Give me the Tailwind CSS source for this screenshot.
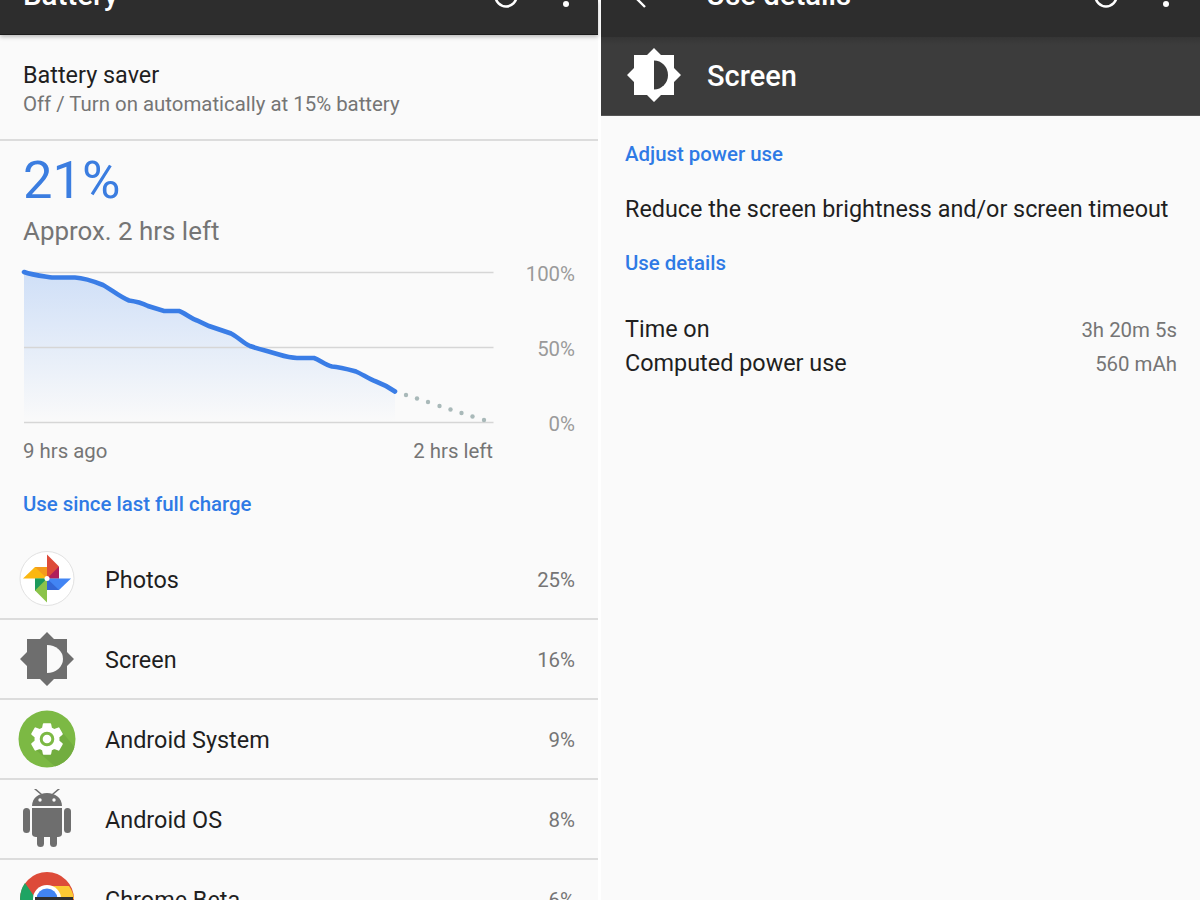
<!DOCTYPE html>
<html>
<head>
<meta charset="utf-8">
<script src="https://cdn.jsdelivr.net/npm/@tailwindcss/browser@4"></script>
</head>
<body class="m-0 bg-white">
<div class="w-[1200px] h-[900px] overflow-hidden flex font-['Roboto',sans-serif] bg-white">
  <!-- Left -->
  <div class="w-[598px] h-[900px] bg-[#fafafa] flex flex-col shrink-0">
    <div class="h-[35px] bg-[#2d2d2d] shrink-0 relative overflow-hidden shadow-[0_2px_4px_rgba(0,0,0,0.25)] z-10 border-b border-[#1c1c1c]">
      <span class="absolute left-[23px] top-[-21px] text-[29.5px] leading-[32px] font-medium text-white">Battery</span>
      <svg class="absolute left-[493px] top-[-17px]" width="26" height="26" viewBox="0 0 26 26" fill="none" stroke="#fff" stroke-width="2.6"><circle cx="13" cy="13" r="10.5"/></svg>
      <div class="absolute left-[563px] top-[1px] w-[6px] h-[6px] rounded-full bg-white"></div>
    </div>
    <div class="h-[106px] shrink-0 border-b-2 border-[#dcdcdc] px-[23px] pt-[25px]">
      <div class="text-[23.4px] leading-[30px] text-[#1f1f1f]">Battery saver</div>
      <div class="text-[20.4px] leading-[28px] text-[#757575]">Off / Turn on automatically at 15% battery</div>
    </div>
    <div class="px-[23px] h-[126px] shrink-0">
      <div class="text-[52.5px] leading-[60px] text-[#3b7de0] mt-[9px]">21%</div>
      <div class="text-[25.9px] leading-[30px] text-[#757575] mt-[6px]">Approx. 2 hrs left</div>
    </div>
    <div class="relative h-[162px] shrink-0">
      <svg class="absolute left-0 top-0" width="598" height="162" viewBox="0 267 598 162">
        <defs>
          <linearGradient id="fillg" x1="0" y1="0" x2="0" y2="1">
            <stop offset="0" stop-color="#cfdff7"/>
            <stop offset="1" stop-color="#fafafa"/>
          </linearGradient>
        </defs>
        <path d="M24 272 C32 275 42 276 52 277.500 L75 277.500 C85 278 93 281 103 285 C112 290 120 297 129 300.500 C137 301.500 142 303 148 306 L164 311 L179 311 C185 313 190 318 197 320.500 L209 326 L231 333.500 C238 337 243 343 250 346 C258 349 265 350.500 272 352.500 C281 355 288 358 297 358 L314 358 C320 360 325 365 332 366.500 C340 367 347 369 356 371.500 C362 374 369 379 376 381.500 C384 384.500 390 388 395 391.500 L395 422 L24 422 Z" fill="url(#fillg)"/>
        <g stroke="#d6d6d6" stroke-width="1.500">
          <path d="M24 272.500H493.500M24 347.500H493.500M24 422.500H493.500"/>
        </g>
        <path d="M24 272 C32 275 42 276 52 277.500 L75 277.500 C85 278 93 281 103 285 C112 290 120 297 129 300.500 C137 301.500 142 303 148 306 L164 311 L179 311 C185 313 190 318 197 320.500 L209 326 L231 333.500 C238 337 243 343 250 346 C258 349 265 350.500 272 352.500 C281 355 288 358 297 358 L314 358 C320 360 325 365 332 366.500 C340 367 347 369 356 371.500 C362 374 369 379 376 381.500 C384 384.500 390 388 395 391.500" fill="none" stroke="#3a7de6" stroke-width="4.600" stroke-linecap="round"/>
        <g fill="#a9b9b9">
          <circle cx="406" cy="395" r="2.200"/><circle cx="417" cy="398.500" r="2.200"/><circle cx="428" cy="402" r="2.200"/><circle cx="439.500" cy="406" r="2.200"/><circle cx="450.500" cy="409.500" r="2.200"/><circle cx="461.500" cy="413" r="2.200"/><circle cx="472.500" cy="416.500" r="2.200"/><circle cx="484" cy="420" r="2.200"/>
        </g>
      </svg>
      <span class="absolute right-[23px] top-[-5px] text-[20.4px] leading-[24px] text-[#9a9a9a]">100%</span>
      <span class="absolute right-[23px] top-[70px] text-[20.4px] leading-[24px] text-[#9a9a9a]">50%</span>
      <span class="absolute right-[23px] top-[145px] text-[20.4px] leading-[24px] text-[#9a9a9a]">0%</span>
    </div>
    <div class="h-[44px] shrink-0 px-[23px] pr-[105px] flex justify-between items-start pt-[10px] text-[20.4px] leading-[24px] text-[#757575]">
      <span>9 hrs ago</span><span>2 hrs left</span>
    </div>
    <div class="h-[67px] shrink-0 px-[23px] pt-[17px] text-[20.4px] leading-[28px] font-medium text-[#2f7ae5]">Use since last full charge</div>

    <div class="h-[80px] shrink-0 flex items-center border-b-2 border-[#dcdcdc] relative">
      <div class="w-[105px] pl-[19px] shrink-0">
        <svg class="block" width="56" height="56" viewBox="0 0 56 56">
          <circle cx="28" cy="27.500" r="27" fill="#fff" stroke="#e2e2e2" stroke-width="1"/>
          <path d="M28 27.500V3.500L40 15.500V27.500Z" fill="#dd4b39"/>
          <path d="M40 15.500V27.500H28Z" fill="#b01e5b"/>
          <path d="M28 27.500H4L16 16H28Z" fill="#fbb710"/>
          <path d="M16 16H28V27.500Z" fill="#f49b1d"/>
          <path d="M28 27.500V51.500L16 39.500V27.500Z" fill="#8bc34a"/>
          <path d="M16 27.500V39.500L28 27.500Z" fill="#1c9a5c"/>
          <path d="M28 27.500H52L40 39H28Z" fill="#4285f4"/>
          <path d="M40 39H28V27.500Z" fill="#3367d6"/>
          <circle cx="28" cy="27.500" r="2.500" fill="#fff"/>
        </svg>
      </div>
      <span class="text-[23.4px] text-[#1f1f1f] translate-y-[2px]">Photos</span>
      <span class="absolute right-[23px] text-[20.4px] text-[#757575] translate-y-[1px]">25%</span>
    </div>
    <div class="h-[80px] shrink-0 flex items-center border-b-2 border-[#dcdcdc] relative">
      <div class="w-[105px] pl-[19px] shrink-0">
        <svg class="block" width="56" height="56" viewBox="0 0 56 56">
          <path d="M28 1L35 8H48V21L55 28L48 35V48H35L28 55L21 48H8V35L1 28L8 21V8H21Z" fill="#6e6e6e"/>
          <path d="M28 14A16 14 0 0 1 28 42Z" fill="#fafafa"/>
        </svg>
      </div>
      <span class="text-[23.4px] text-[#1f1f1f] translate-y-[2px]">Screen</span>
      <span class="absolute right-[23px] text-[20.4px] text-[#757575] translate-y-[1px]">16%</span>
    </div>
    <div class="h-[80px] shrink-0 flex items-center border-b-2 border-[#dcdcdc] relative">
      <div class="w-[105px] pl-[18px] shrink-0">
        <svg class="block" width="58" height="58" viewBox="0 0 58 58">
          <circle cx="29" cy="29" r="28.500" fill="#7cb944"/>
          <path d="M40 17L56.500 37A28.500 28.500 0 0 1 37 56.500L18 40Z" fill="#72ad3f"/>
          <g transform="translate(29 29) scale(0.83) translate(-29 -29)">
            <path d="M25 11H33L34 16L38 18L43 16L47 23L43 26.500V31.500L47 35L43 42L38 40L34 42L33 47H25L24 42L20 40L15 42L11 35L15 31.500V26.500L11 23L15 16L20 18L24 16Z" fill="#fff" stroke="#fff" stroke-width="2" stroke-linejoin="round"/>
            <circle cx="29" cy="29" r="7" fill="#fff" stroke="#7cb944" stroke-width="3.600"/>
          </g>
        </svg>
      </div>
      <span class="text-[23.4px] text-[#1f1f1f] translate-y-[2px]">Android System</span>
      <span class="absolute right-[23px] text-[20.4px] text-[#757575] translate-y-[1px]">9%</span>
    </div>
    <div class="h-[80px] shrink-0 flex items-center border-b-2 border-[#dcdcdc] relative">
      <div class="w-[105px] pl-[22px] shrink-0">
        <svg class="block" width="50" height="60" viewBox="0 0 50 60" fill="#6e6e6e">
          <path d="M13 0L19 5M37 0L31 5" stroke="#6e6e6e" stroke-width="1.600" stroke-linecap="round"/>
          <path d="M10 17C10 9 17 4 25 4C33 4 40 9 40 17Z"/>
          <circle cx="18" cy="11" r="1.700" fill="#fafafa"/><circle cx="32" cy="11" r="1.700" fill="#fafafa"/>
          <path d="M10 19H40V45C40 47 38 48 36 48H14C12 48 10 47 10 45Z"/>
          <rect x="1" y="19" width="7" height="25" rx="3.500"/>
          <rect x="42" y="19" width="7" height="25" rx="3.500"/>
          <rect x="15" y="44" width="7" height="14" rx="3.500"/>
          <rect x="28" y="44" width="7" height="14" rx="3.500"/>
        </svg>
      </div>
      <span class="text-[23.4px] text-[#1f1f1f] translate-y-[2px]">Android OS</span>
      <span class="absolute right-[23px] text-[20.4px] text-[#757575] translate-y-[1px]">8%</span>
    </div>
    <div class="h-[80px] shrink-0 flex items-center relative">
      <div class="w-[105px] pl-[19px] shrink-0">
        <svg class="block -translate-y-[1px]" width="56" height="56" viewBox="0 0 56 56">
          <circle cx="28" cy="28" r="27" fill="#dd4b39"/>
          <path d="M28 15H50A27 27 0 0 1 55 28H28Z" fill="#fcc934"/>
          <path d="M1 28A27 27 0 0 1 6 12L17 28V56H10Z" fill="#1fa463"/>
          <circle cx="28" cy="28" r="14" fill="#fff"/>
          <circle cx="28" cy="28" r="10.500" fill="#4285f4"/>
          <rect x="16" y="26" width="38" height="30" fill="#303030"/>
        </svg>
      </div>
      <span class="text-[23.4px] text-[#1f1f1f] translate-y-[1px]">Chrome Beta</span>
      <span class="absolute right-[23px] text-[20.4px] text-[#757575]">6%</span>
    </div>
  </div>
  <div class="w-[3px] shrink-0 bg-white"></div>
  <!-- Right -->
  <div class="flex-1 h-[900px] bg-[#fafafa] flex flex-col">
    <div class="h-[37px] bg-[#2d2d2d] shrink-0 relative overflow-hidden">
      <svg class="absolute left-[32px] top-[-8px]" width="16" height="16" viewBox="0 0 16 16" fill="none" stroke="#fff" stroke-width="2.400"><path d="M12 1L5 8L12 15"/></svg>
      <span class="absolute left-[105px] top-[-21px] text-[29.3px] leading-[32px] font-medium text-white">Use details</span>
      <svg class="absolute left-[492px] top-[-17px]" width="26" height="26" viewBox="0 0 26 26" fill="none" stroke="#fff" stroke-width="2.600"><circle cx="13" cy="13" r="10.500"/></svg>
      <div class="absolute left-[562px] top-[1px] w-[6px] h-[6px] rounded-full bg-white"></div>
    </div>
    <div class="h-[79px] bg-gradient-to-b from-[#353535] from-0% to-[#3c3c3c] to-10% shrink-0 flex items-center border-b border-[#555]">
      <svg class="ml-[25px] shrink-0 -translate-y-[1px]" width="56" height="56" viewBox="0 0 56 56">
        <path d="M28 1L35 8H48V21L55 28L48 35V48H35L28 55L21 48H8V35L1 28L8 21V8H21Z" fill="#fff"/>
        <path d="M28 13.500A14 14.500 0 0 1 28 42.500Z" fill="#3b3b3b"/>
      </svg>
      <span class="ml-[25px] text-[29px] font-medium text-white translate-y-[1px]">Screen</span>
    </div>
    <div class="px-[24px] pr-[23px]">
      <div class="mt-[24px] text-[20.4px] leading-[28px] font-medium text-[#2f7ae5]">Adjust power use</div>
      <div class="mt-[26px] text-[23.35px] leading-[31px] text-[#1f1f1f] whitespace-nowrap">Reduce the screen brightness and/or screen timeout</div>
      <div class="mt-[24px] text-[20.4px] leading-[28px] font-medium text-[#2f7ae5]">Use details</div>
      <div class="mt-[36px] flex justify-between items-center h-[34px]"><span class="text-[23.4px] text-[#1f1f1f]">Time on</span><span class="text-[20.4px] text-[#757575]">3h 20m 5s</span></div>
      <div class="flex justify-between items-center h-[34px]"><span class="text-[23.4px] text-[#1f1f1f]">Computed power use</span><span class="text-[20.4px] text-[#757575]">560 mAh</span></div>
    </div>
  </div>
</div>
</body>
</html>
